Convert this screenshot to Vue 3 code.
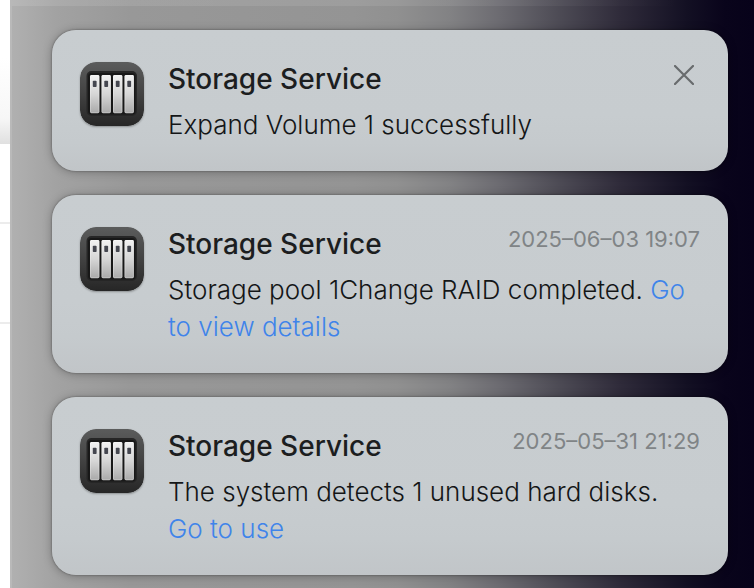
<script setup>
import { ref } from 'vue'

const bays = [10, 21.5, 33, 44.5]

const notices = ref([
  { id: 1, title: 'Storage Service', text: 'Expand Volume 1 successfully', closable: true },
  {
    id: 2,
    title: 'Storage Service',
    text: 'Storage pool 1Change RAID completed.',
    link: 'Go to view details',
    time: '2025–06–03 19:07'
  },
  {
    id: 3,
    title: 'Storage Service',
    text: 'The system detects 1 unused hard disks.',
    link: 'Go to use',
    time: '2025–05–31 21:29'
  }
])

function dismiss(id) {
  notices.value = notices.value.filter((n) => n.id !== id)
}
</script>

<template>
  <div class="desktop">
    <div class="window-edge">
      <div class="edge-head"></div>
      <div class="edge-row"></div>
      <div class="edge-row edge-row-next"></div>
    </div>
    <main class="panel">
      <article v-for="n in notices" :key="n.id" class="card">
        <svg class="app-icon" viewBox="0 0 64 64" aria-hidden="true">
          <defs>
            <linearGradient :id="'shell' + n.id" x1="0" y1="0" x2="0" y2="1">
              <stop offset="0" stop-color="#5b5c5c" />
              <stop offset="0.5" stop-color="#424242" />
              <stop offset="1" stop-color="#262626" />
            </linearGradient>
            <linearGradient :id="'bay' + n.id" x1="0" y1="0" x2="0" y2="1">
              <stop offset="0" stop-color="#f2f2f2" />
              <stop offset="0.5" stop-color="#d6d6d6" />
              <stop offset="1" stop-color="#a9a9a9" />
            </linearGradient>
          </defs>
          <rect width="64" height="64" rx="16" :fill="`url(#shell${n.id})`" />
          <rect x="6.5" y="9" width="50.5" height="45" rx="5" fill="#262626" />
          <rect x="8" y="11" width="47.5" height="41.5" rx="3.5" fill="#181818" />
          <g v-for="x in bays" :key="x">
            <rect :x="x" y="13" width="9.4" height="38.2" rx="1.4" :fill="`url(#bay${n.id})`" />
            <rect :x="x + 0.5" y="13.5" width="8.4" height="37.2" rx="1" fill="none" stroke="#fff" stroke-opacity="0.25" />
            <rect :x="x + 2.8" y="18.8" width="3.8" height="6.2" rx="0.8" fill="#454750" />
          </g>
        </svg>
        <div class="content">
          <header class="head">
            <h2 class="title">{{ n.title }}</h2>
            <time v-if="n.time" class="time">{{ n.time }}</time>
            <button v-if="n.closable" class="close" type="button" aria-label="Close" @click="dismiss(n.id)">
              <svg viewBox="0 0 20 20" width="20" height="20" aria-hidden="true">
                <path d="M1 1L19 19M19 1L1 19" fill="none" stroke="#686b6d" stroke-width="2.2" stroke-linecap="round" />
              </svg>
            </button>
          </header>
          <p class="message">
            {{ n.text }}
            <a v-if="n.link" class="link" href="#">{{ n.link }}</a>
          </p>
        </div>
      </article>
    </main>
  </div>
</template>

<style>
body {
  overflow: hidden;
}
</style>

<style scoped>
.desktop {
  display: flex;
  min-height: 100vh;
  font-family: Inter, 'Noto Sans', sans-serif;
  color: #1c1e1f;
}

.window-edge {
  flex: 0 0 10px;
  background: #fff;
}

.edge-head {
  height: 144px;
  background: linear-gradient(#fff 0, #fff 40%, #f7f7f7 82%, #e0e0e0 100%);
}

.edge-row {
  height: 78px;
  border-bottom: 2px solid #ececec;
}

.edge-row-next {
  height: 98px;
}

.panel {
  flex: 1;
  min-width: 0;
  box-sizing: border-box;
  display: flex;
  flex-direction: column;
  gap: 24px;
  padding: 30px 26px 13px 40px;
  border-left: 2px solid #b9b9b9;
  background:
    linear-gradient(90deg, rgba(255, 255, 255, 0.1), rgba(255, 255, 255, 0.08) 60%, rgba(255, 255, 255, 0) 90%) top / 100% 6px no-repeat,
    linear-gradient(
      90deg,
      #b0b0b0 0,
      #a2a2a2 6%,
      #989898 16%,
      #949494 46%,
      #909090 52%,
      #828284 59%,
      #6b6a70 66%,
      #4c4a54 74%,
      #2f2b3a 82%,
      #131023 91%,
      #09041b 96%,
      #07021a 100%
    );
}

.card {
  display: flex;
  gap: 24px;
  padding: 29px 28px 28px;
  border-radius: 24px;
  background: linear-gradient(#c8cdd0 0, #c7cccf 60%, #c5cacd 80%, #c1c5c8 100%);
  box-shadow:
    0 0 2px rgba(0, 0, 0, 0.45),
    0 1px 10px rgba(0, 0, 0, 0.28);
}

.app-icon {
  flex: none;
  width: 64px;
  height: 64px;
  margin-top: 3px;
  border-radius: 16px;
  box-shadow: 0 1px 2px rgba(0, 0, 0, 0.3);
}

.content {
  flex: 1;
  min-width: 0;
}

.head {
  display: flex;
  justify-content: space-between;
  height: 40px;
}

.title {
  margin: 0;
  font-size: 28px;
  font-weight: 500;
  line-height: 40px;
}

.time {
  font-size: 22px;
  font-weight: 400;
  line-height: 30px;
  color: #808486;
}

.close {
  display: flex;
  align-items: center;
  justify-content: center;
  width: 32px;
  height: 32px;
  padding: 0;
  border: 0;
  background: none;
  cursor: pointer;
}

.message {
  margin: 7px 0 0;
  font-size: 26px;
  font-weight: 300;
  line-height: 37px;
  color: #141617;
}

.link {
  color: #3f84ea;
  text-decoration: none;
}
</style>
